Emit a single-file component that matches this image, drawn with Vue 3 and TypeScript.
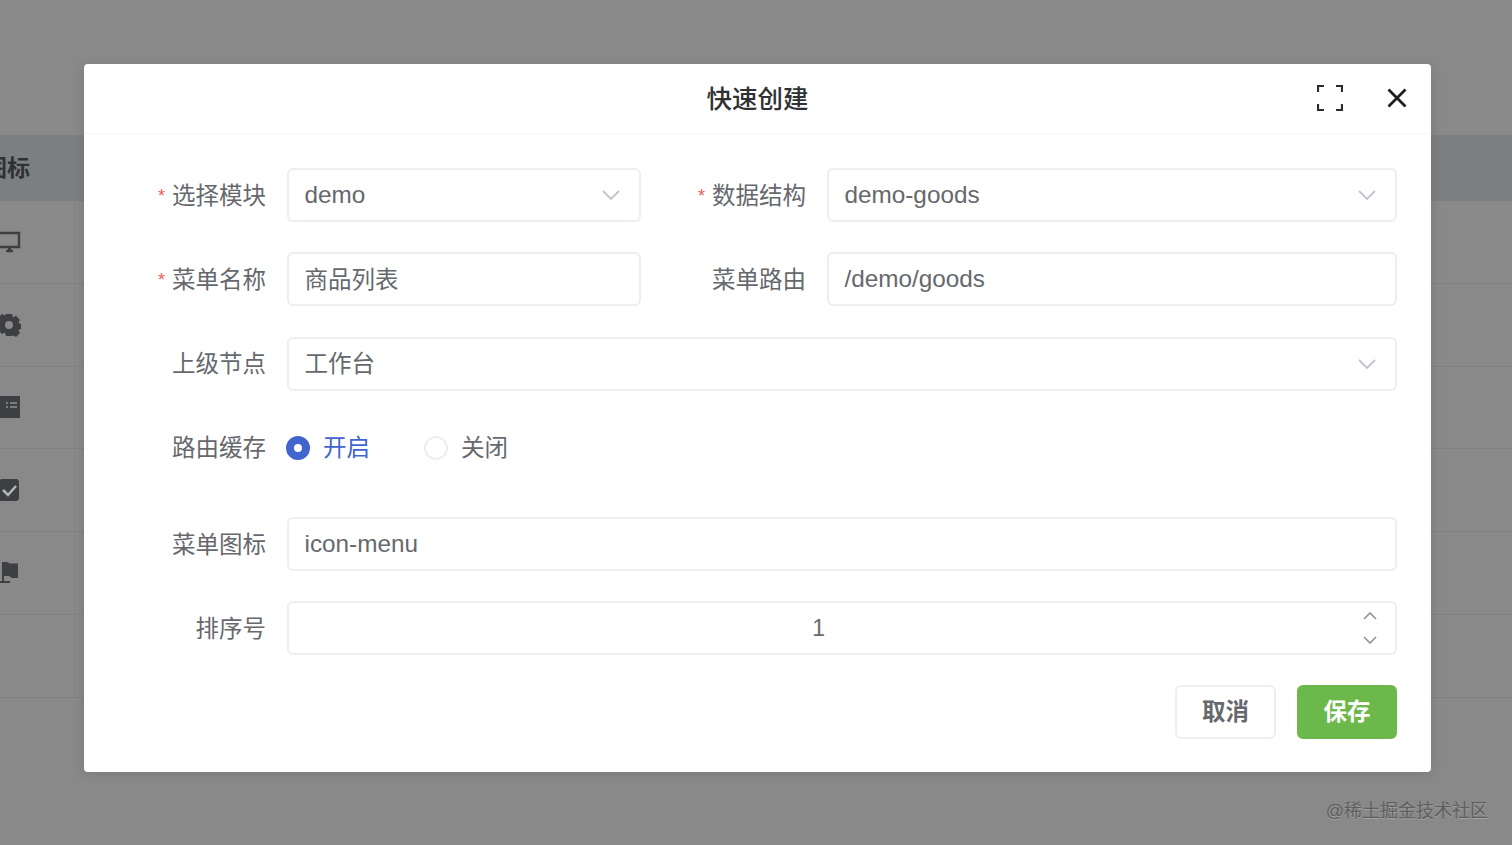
<script setup lang="ts">
import { ref } from 'vue'

const bgRows = ['monitor', 'gear', 'list', 'check', 'flag', 'none']
const cache = ref('on')
</script>

<template>
  <div class="page">
    <div class="bg-table">
      <div class="bg-head"><span class="bg-title">图标</span></div>
      <div v-for="row in bgRows" :key="row" class="bg-row">
        <div class="bg-cell">
          <svg v-if="row === 'monitor'" class="bg-icon" viewBox="0 0 24 24">
            <path d="M1 3h21v14H1z" fill="none" stroke="#3d3f42" stroke-width="2.400" />
            <path d="M9 21h7" fill="none" stroke="#3d3f42" stroke-width="2.400" />
            <path d="M11 17h3v4h-3z" fill="#3d3f42" />
          </svg>
          <svg v-else-if="row === 'gear'" class="bg-icon" viewBox="0 0 24 24">
            <path fill="#3d3f42" fill-rule="evenodd" d="M9 1h6l1 3.200 3-1.400 4 4.200-1.600 3 2.600 1v5l-2.600 1 1.600 3-4 4-3-1.400L15 23H9l-1-3.400L5 21l-4-4 1.600-3L0 13V9l2.600-1L1 5l4-4 3 1.400zM12 8a4 4 0 1 0 0 8 4 4 0 0 0 0-8z" />
          </svg>
          <svg v-else-if="row === 'list'" class="bg-icon" viewBox="0 0 24 24">
            <path fill="#3d3f42" d="M0 1h23v22H0z" />
            <path stroke="#8f9092" stroke-width="1.500" d="M9 8h2M13 8h7M9 12h2M13 12h7" />
          </svg>
          <svg v-else-if="row === 'check'" class="bg-icon" viewBox="0 0 24 24">
            <path fill="#3d3f42" d="M4 1h16l2 2v18l-2 2H3l-2-2V4z" />
            <path fill="none" stroke="#b5b6b7" stroke-width="2.500" d="M6 12l5 5 8-9" />
          </svg>
          <svg v-else-if="row === 'flag'" class="bg-icon" viewBox="0 0 24 24">
            <path fill="#3d3f42" d="M5 1h5l3 1.500h8V17h-6l-3-2H7v5h6v2H0v-2h5z" />
          </svg>
        </div>
      </div>
    </div>

    <div class="dialog">
      <header class="dialog-head">
        <span></span>
        <h2 class="dialog-title">快速创建</h2>
        <div class="dialog-tools">
          <svg class="tool-full" viewBox="0 0 26 26">
            <path d="M1 7V1h6M19 1h6v6M25 19v6h-6M7 25H1v-6" fill="none" stroke="#2c2d30" stroke-width="2.200" />
          </svg>
          <svg class="tool-close" viewBox="0 0 20 20">
            <path d="M1.500 1.500l17 17M18.500 1.500l-17 17" fill="none" stroke="#1d1e21" stroke-width="2.800" />
          </svg>
        </div>
      </header>

      <div class="dialog-body">
        <div class="split">
          <div class="item">
            <label class="label"><i>*</i>选择模块</label>
            <div class="control">
              <span>demo</span>
              <svg class="arrow" viewBox="0 0 18 10"><path d="M1 1l8 8 8-8" /></svg>
            </div>
          </div>
          <div class="item">
            <label class="label"><i>*</i>数据结构</label>
            <div class="control">
              <span>demo-goods</span>
              <svg class="arrow" viewBox="0 0 18 10"><path d="M1 1l8 8 8-8" /></svg>
            </div>
          </div>
        </div>

        <div class="split">
          <div class="item">
            <label class="label"><i>*</i>菜单名称</label>
            <div class="control"><span class="cjk">商品列表</span></div>
          </div>
          <div class="item">
            <label class="label">菜单路由</label>
            <div class="control"><span>/demo/goods</span></div>
          </div>
        </div>

        <div class="item">
          <label class="label">上级节点</label>
          <div class="control">
            <span class="cjk">工作台</span>
            <svg class="arrow" viewBox="0 0 18 10"><path d="M1 1l8 8 8-8" /></svg>
          </div>
        </div>

        <div class="item item-radio">
          <label class="label">路由缓存</label>
          <div class="radios">
            <div class="radio" :class="{ on: cache === 'on' }" @click="cache = 'on'">
              <b class="dot"></b><span class="cjk">开启</span>
            </div>
            <div class="radio" :class="{ on: cache === 'off' }" @click="cache = 'off'">
              <b class="dot"></b><span class="cjk">关闭</span>
            </div>
          </div>
        </div>

        <div class="item">
          <label class="label">菜单图标</label>
          <div class="control"><span>icon-menu</span></div>
        </div>

        <div class="item">
          <label class="label">排序号</label>
          <div class="control control-number">
            <span class="number">1</span>
            <div class="stepper">
              <svg viewBox="0 0 14 8"><path d="M1 7l6-6 6 6" /></svg>
              <svg viewBox="0 0 14 8"><path d="M1 1l6 6 6-6" /></svg>
            </div>
          </div>
        </div>

        <div class="actions">
          <button class="btn">取消</button>
          <button class="btn btn-save">保存</button>
        </div>
      </div>
    </div>

    <div class="watermark">@稀土掘金技术社区</div>
  </div>
</template>

<style>
html,
body {
  margin: 0;
  overflow: hidden;
  background: #898989;
}
</style>

<style scoped>
.page {
  position: relative;
  height: 845px;
  overflow: hidden;
  background: #898989;
  font-family: "Liberation Sans", "Noto Sans CJK SC", sans-serif;
}

.bg-table {
  padding-top: 135px;
}

.bg-head {
  height: 66px;
  background: #7c7e80;
  display: flex;
  align-items: center;
}

.bg-title {
  margin-left: -16px;
  padding-bottom: 4px;
  font-size: 23px;
  font-weight: 700;
  color: #303133;
}

.bg-row {
  height: 82.800px;
  box-sizing: border-box;
  border-bottom: 1px solid #818181;
}

.bg-cell {
  width: 75px;
  height: 100%;
  box-sizing: border-box;
  border-right: 1px solid #848484;
  display: flex;
  align-items: center;
}

.bg-icon {
  width: 24px;
  height: 24px;
  margin-left: -3px;
}

.dialog {
  position: absolute;
  left: 84px;
  top: 64px;
  width: 1347px;
  height: 708px;
  background: #fff;
  border-radius: 4px;
  box-shadow: 0 2px 12px rgba(0, 0, 0, 0.12);
}

.dialog-head {
  height: 70px;
  padding-bottom: 2px;
  box-sizing: border-box;
  border-bottom: 1px solid #f7f7f7;
  display: grid;
  grid-template-columns: 1fr auto 1fr;
  align-items: center;
}

.dialog-title {
  margin: 0 0 2px;
  font-size: 25.500px;
  font-weight: 500;
  color: #303133;
}

.dialog-tools {
  display: flex;
  justify-content: flex-end;
  align-items: center;
  gap: 44px;
  padding-right: 24px;
}

.tool-full {
  width: 26px;
  height: 26px;
}

.tool-close {
  width: 20px;
  height: 20px;
}

.dialog-body {
  padding: 34px 34px 0 72px;
  display: flex;
  flex-direction: column;
  gap: 30.300px;
}

.split {
  display: grid;
  grid-template-columns: 485px 1fr;
  column-gap: 55px;
}

.item {
  display: flex;
  align-items: center;
  gap: 21px;
  height: 54px;
}

.item-radio {
  margin-bottom: 12px;
}

.label {
  width: 110px;
  flex: none;
  padding-bottom: 3px;
  text-align: right;
  font-size: 23.500px;
  color: #66686d;
  white-space: nowrap;
}

.label i {
  font-style: normal;
  font-size: 18px;
  color: #e8605c;
  margin-right: 7px;
  vertical-align: 2px;
}

.control {
  flex: 1;
  height: 54px;
  margin-left: -0.500px;
  box-sizing: border-box;
  border: 2px solid #eceef1;
  border-radius: 6px;
  padding: 0 19px 0 16px;
  display: flex;
  align-items: center;
  justify-content: space-between;
  font-size: 24.300px;
  color: #66686d;
}

.cjk {
  font-size: 23.500px;
  padding-bottom: 3px;
}

.arrow {
  width: 18px;
  height: 10px;
  fill: none;
  stroke: #c0c4cc;
  stroke-width: 1.800;
}

.control-number {
  position: relative;
  justify-content: center;
  padding-right: 62px;
}

.number {
  font-size: 23px;
  font-weight: 500;
}

.stepper {
  position: absolute;
  right: 18px;
  top: 0;
  bottom: 0;
  display: flex;
  flex-direction: column;
  justify-content: center;
  gap: 16px;
}

.stepper svg {
  display: block;
  width: 14px;
  height: 8px;
  fill: none;
  stroke: #8e9197;
  stroke-width: 1.600;
}

.radios {
  display: flex;
  align-items: center;
  gap: 54px;
  margin-left: -1px;
}

.radio {
  display: flex;
  align-items: center;
  gap: 13px;
  font-size: 23.500px;
  color: #66686d;
  cursor: pointer;
}

.dot {
  width: 24px;
  height: 24px;
  box-sizing: border-box;
  border: 2px solid #eceef1;
  border-radius: 50%;
  background: #fff;
}

.radio.on {
  color: #4164d0;
}

.radio.on .dot {
  border: 8px solid #4164d0;
}

.actions {
  display: flex;
  justify-content: flex-end;
  gap: 21px;
  margin-top: -1px;
}

.btn {
  width: 101px;
  height: 54px;
  padding: 0 0 3px;
  box-sizing: border-box;
  border: 2px solid #eceef1;
  border-radius: 6px;
  background: #fff;
  color: #66686d;
  font-family: inherit;
  font-size: 23.500px;
  font-weight: 700;
  cursor: pointer;
}

.btn-save {
  width: 100px;
  border-color: #6cb84a;
  background: #6cb84a;
  color: #fff;
}

.watermark {
  position: absolute;
  right: 24px;
  bottom: 23px;
  font-size: 18px;
  color: #5e5e5e;
  text-shadow: 0 1px 0 #a3a3a3;
}
</style>
